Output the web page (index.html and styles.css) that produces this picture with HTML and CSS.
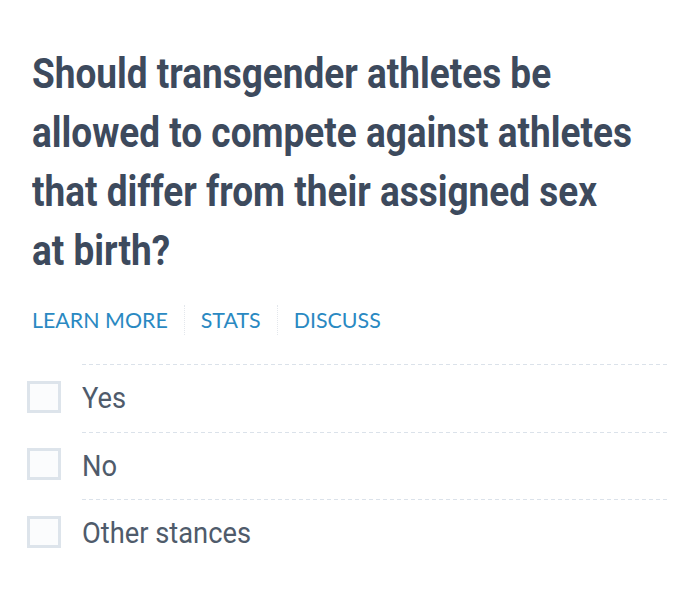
FILE: index.html
```html
<!DOCTYPE html>
<html>
<head>
<meta charset="utf-8">
<link rel="stylesheet" href="styles.css">
</head>
<body>
<div class="card">
  <h1 class="question">Should transgender athletes be<br>allowed to compete against athletes<br>that differ from their assigned sex<br>at birth?</h1>
  <nav class="links">
    <a class="link">LEARN MORE</a>
    <a class="link">STATS</a>
    <a class="link">DISCUSS</a>
  </nav>
  <ul class="options">
    <li class="option"><span class="box"></span><span class="label">Yes</span></li>
    <li class="option"><span class="box"></span><span class="label">No</span></li>
    <li class="option"><span class="box"></span><span class="label">Other stances</span></li>
  </ul>
</div>
</body>
</html>
```
FILE: styles.css
```css
html, body { margin: 0; padding: 0; background: #fff; }
.card { padding: 44px 20px 0 32px; }
.question {
  margin: 0;
  font-family: Roboto, "Liberation Sans", sans-serif;
  font-weight: 700;
  font-size: 42px;
  line-height: 59px;
  color: #3d4a5d;
  white-space: nowrap;
  transform: scaleX(0.88);
  transform-origin: left top;
}
.links { display: flex; margin-top: 25px; height: 30px; align-items: center; }
.link {
  font-family: Lato, sans-serif;
  font-size: 21.4px;
  color: #2a89c2;
  padding: 0 16px;
  border-left: 1px dotted #e3e7ec;
  line-height: 30px;
}
.link:first-child { padding-left: 0; border-left: none; }
.options { list-style: none; margin: 29px 0 0 -5px; padding: 0; }
.option {
  display: flex;
  align-items: center;
  height: 67.5px;
  padding-bottom: 2px;
  box-sizing: border-box;
  position: relative;
}
.option::before {
  content: "";
  position: absolute;
  top: 0; left: 55px; right: 0;
  height: 1px;
  background: repeating-linear-gradient(to right, #dbe2ea 0 4px, transparent 4px 7px);
}
.box {
  width: 28px; height: 26px;
  border: 3px solid #dde4eb;
  background: #fbfcfd;
  margin-right: 21px;
  flex: none;
}
.label {
  display: inline-block;
  font-family: Roboto, sans-serif;
  font-size: 30px;
  line-height: 32px;
  margin-top: 3px;
  color: #4f5b6b;
  white-space: nowrap;
  transform: scaleX(0.91);
  transform-origin: left center;
}
```
